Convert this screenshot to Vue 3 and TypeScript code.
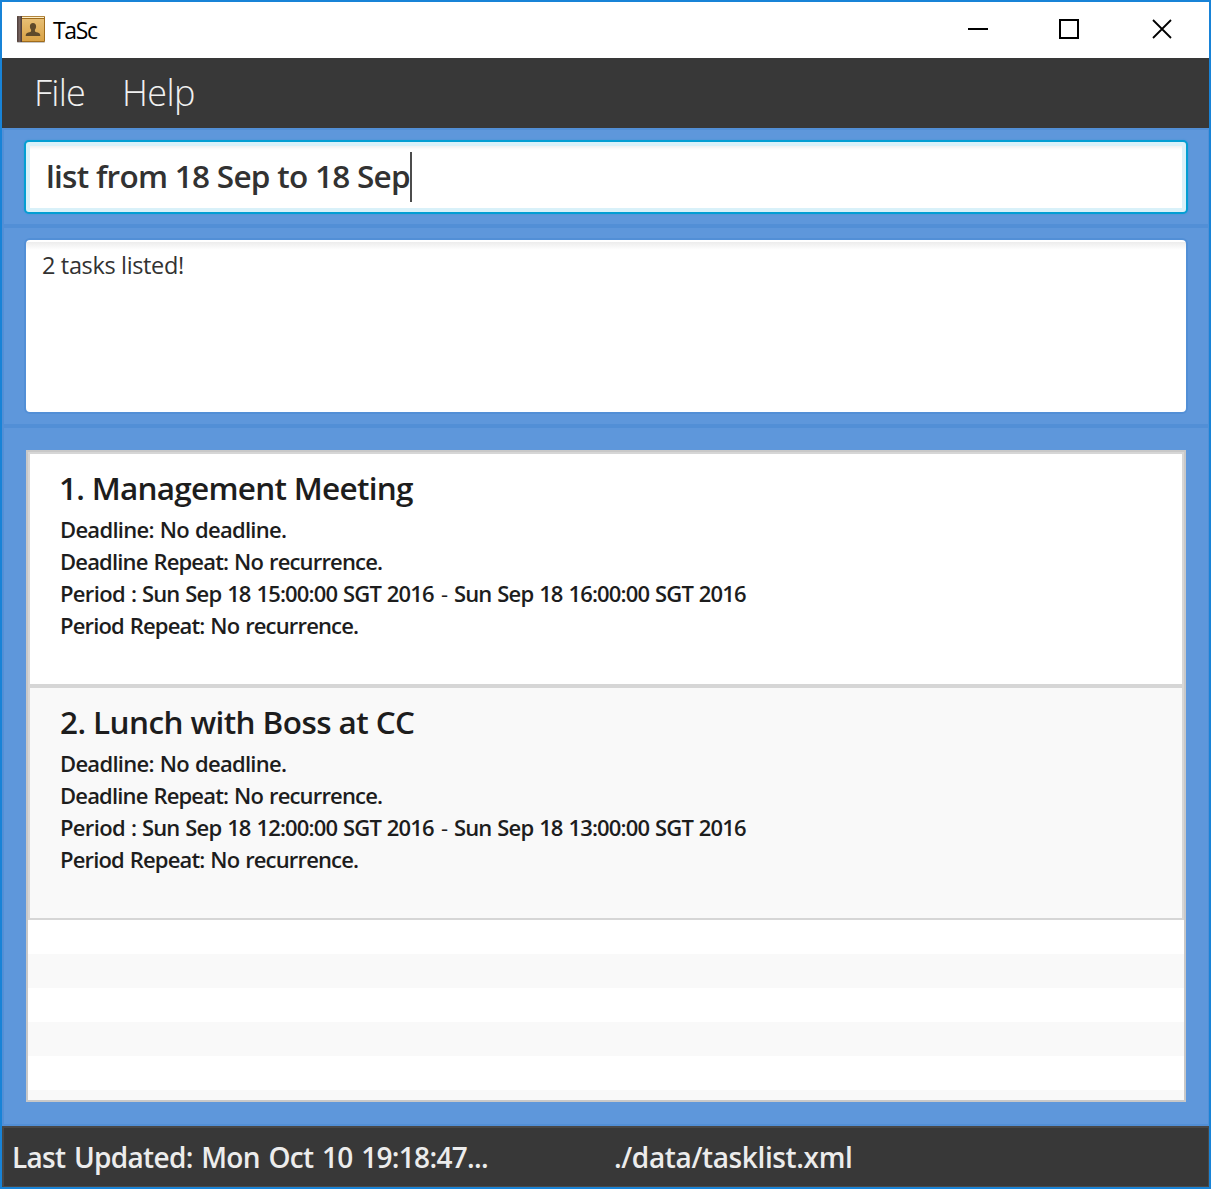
<script setup lang="ts">
import type { Directive } from 'vue'

interface Task {
  title: string
  titleWidth: number
  start: string
  end: string
}

const tasks: Task[] = [
  { title: '1. Management Meeting', titleWidth: 352, start: 'Sun Sep 18 15:00:00 SGT 2016', end: 'Sun Sep 18 16:00:00 SGT 2016' },
  { title: '2. Lunch with Boss at CC', titleWidth: 353, start: 'Sun Sep 18 12:00:00 SGT 2016', end: 'Sun Sep 18 13:00:00 SGT 2016' },
]

// Tracks a label out or in so that its glyphs span the given number of pixels.
const vFit: Directive<HTMLElement, number> = {
  mounted(el, binding) {
    const text = (el.textContent ?? '').trim()
    const ctx = document.createElement('canvas').getContext('2d')
    if (!ctx || text.length < 2) return
    const cs = getComputedStyle(el)
    ctx.font = `${cs.fontWeight} ${cs.fontSize} ${cs.fontFamily}`
    const m = ctx.measureText(text)
    const gaps = (text.split(' ').length - 1) * (parseFloat(cs.wordSpacing) || 0)
    const ink = m.actualBoundingBoxLeft + m.actualBoundingBoxRight + gaps
    el.style.letterSpacing = `${(binding.value - ink) / (text.length - 1)}px`
    el.style.marginLeft = `${m.actualBoundingBoxLeft}px`
  },
}
</script>

<template>
  <div class="window">
    <header class="titlebar">
      <svg class="app-icon" width="30" height="30" viewBox="0 0 30 30">
        <defs>
          <linearGradient id="cover" x1="0" y1="0" x2="0" y2="1">
            <stop offset="0" stop-color="#e6be74" />
            <stop offset="1" stop-color="#d9a245" />
          </linearGradient>
          <linearGradient id="spine" x1="0" y1="0" x2="1" y2="0">
            <stop offset="0" stop-color="#4a3b38" />
            <stop offset=".5" stop-color="#75625e" />
            <stop offset="1" stop-color="#463734" />
          </linearGradient>
        </defs>
        <rect x="1" y="26" width="28" height="2" rx="1" fill="#000" opacity=".22" />
        <rect x="1" y="1" width="28" height="26" rx="1" fill="#a06c1c" />
        <rect x="6" y="1.800" width="22" height="1.200" fill="#fff0c8" />
        <rect x="6" y="4" width="22" height="22" fill="url(#cover)" />
        <path d="M1 2q0-1 1-1h4v26H2q-1 0-1-1z" fill="url(#spine)" />
        <path d="M17 8c2 0 3.100 1.300 3.100 3.200 0 1.500-.5 2.700-1.200 3.500v1.200c0 .8 1.200 1.200 2.800 1.700 2 .6 2.600 1.600 2.600 3.400H9.700c0-1.800.6-2.800 2.600-3.400 1.600-.5 2.800-.9 2.800-1.700v-1.200c-.7-.8-1.200-2-1.200-3.500C13.900 9.300 15 8 17 8z" fill="#5e4a2b" />
      </svg>
      <span class="app-name"><span v-fit="45">TaSc</span></span>
      <svg class="controls" width="206" height="22" viewBox="0 0 206 22" fill="none" stroke="#000" stroke-width="2">
        <path d="M0 11h20" />
        <rect x="92" y="2" width="18" height="18" />
        <path d="M185 2l18 18M203 2l-18 18" stroke-width="1.8" />
      </svg>
    </header>

    <nav class="menubar">
      <span class="menu file"><span v-fit="47">File</span></span>
      <span class="menu"><span v-fit="69">Help</span></span>
    </nav>

    <section class="pane command">
      <div class="field"><span v-fit="362">list from 18 Sep to 18 Sep</span><i class="caret"></i></div>
    </section>

    <section class="pane result">
      <div class="output"><span v-fit="140">2 tasks listed!</span></div>
    </section>

    <section class="pane tasks">
      <div class="list">
        <article v-for="task in tasks" :key="task.title" class="card">
          <h2><span v-fit="task.titleWidth">{{ task.title }}</span></h2>
          <p><span v-fit="224">Deadline: No deadline.</span></p>
          <p><span v-fit="320">Deadline Repeat: No recurrence.</span></p>
          <p class="period">
            <span class="label"><span v-fit="74">Period :</span></span>
            <span class="start"><span v-fit="291">{{ task.start }}</span></span>
            <span class="dash">-</span>
            <span><span v-fit="291">{{ task.end }}</span></span>
          </p>
          <p><span v-fit="296">Period Repeat: No recurrence.</span></p>
        </article>
        <div v-for="n in 5" :key="n" class="empty"></div>
        <div class="empty rest"></div>
      </div>
    </section>

    <footer class="statusbar">
      <span class="updated"><span v-fit="473">Last Updated: Mon Oct 10 19:18:47...</span></span>
      <span><span v-fit="236">./data/tasklist.xml</span></span>
    </footer>
  </div>
</template>

<style>
body {
  margin: 0;
  overflow: hidden;
}
</style>

<style scoped>
.window {
  box-sizing: border-box;
  width: 1211px;
  height: 1189px;
  border: 2px solid #1883d7;
  background: #5e97db;
  display: flex;
  flex-direction: column;
  font-family: "Open Sans", "Noto Sans", sans-serif;
  white-space: nowrap;
}
.window * {
  box-sizing: border-box;
}
.titlebar {
  height: 56px;
  display: flex;
  background: #fff;
  padding-left: 14px;
}
.app-icon {
  margin-top: 13px;
}
.app-name {
  margin-left: 7px;
  font-size: 23px;
  line-height: 57px;
  height: 56px;
  color: #000;
}
.controls {
  margin: 16px 35px 0 auto;
}
.menubar {
  height: 70px;
  background: #383838;
  display: flex;
  padding-left: 35px;
  font-size: 36px;
  font-weight: 300;
  line-height: 70px;
  color: #f0f0f0;
}
.menu.file {
  width: 88px;
}
.pane {
  flex: none;
  border: 2px solid #528fd6;
  border-right-width: 1px;
}
.command {
  height: 98px;
  padding: 10px 20px 0;
}
.field {
  height: 74px;
  border: 2px solid #039ed3;
  border-radius: 5px;
  background: #fff;
  box-shadow: 0 0 2px #3d93d3, inset 0 0 0 4px #d9f1f9, inset 0 7px 3px -1px #f1f1f1;
  padding: 10px 0 0 22px;
  display: flex;
  font-size: 31.5px;
  font-weight: 600;
  line-height: 48px;
  color: #323232;
}
.caret {
  width: 2px;
  height: 50px;
  background: #4c4c4c;
}
.result {
  height: 200px;
  padding: 10px 20px 0;
}
.output {
  height: 176px;
  border: 2px solid #528fd6;
  border-radius: 6px;
  background: linear-gradient(#fff 2px, #ececec 2px, #fff 10px);
  padding: 8px 0 0 17px;
  font-size: 23.5px;
  line-height: 34px;
  color: #323232;
}
.tasks {
  height: 700px;
  padding: 22px 22px 0;
}
.list {
  height: 652px;
  border: 2px solid #c8c8c8;
  background: #fff;
  overflow: hidden;
}
.card {
  height: 234px;
  border: 2px solid #d6d6d6;
  padding: 14px 0 0 31px;
  color: #1d1d1d;
  font-weight: 600;
}
.card:nth-child(even),
.empty:nth-child(even) {
  background: #f9f9f9;
}
h2 {
  margin: 0 0 5px;
  font-size: 31.5px;
  font-weight: 600;
  line-height: 40px;
}
p {
  margin: 0;
  padding-left: 1px;
  font-size: 22px;
  line-height: 32px;
  word-spacing: 1px;
}
.period {
  display: flex;
}
.label {
  width: 81px;
}
.start {
  width: 298px;
}
.dash {
  width: 14px;
  font-weight: 400;
}
.empty {
  height: 34px;
}
.statusbar {
  flex: 1;
  border: solid #484848;
  border-width: 2px 1px 1px 2px;
  background: #383838;
  color: #ececec;
  display: flex;
  padding: 1px 0 0 10px;
  font-size: 28px;
  font-weight: 600;
  line-height: 57px;
  word-spacing: 2px;
}
.updated {
  width: 601px;
}
</style>
